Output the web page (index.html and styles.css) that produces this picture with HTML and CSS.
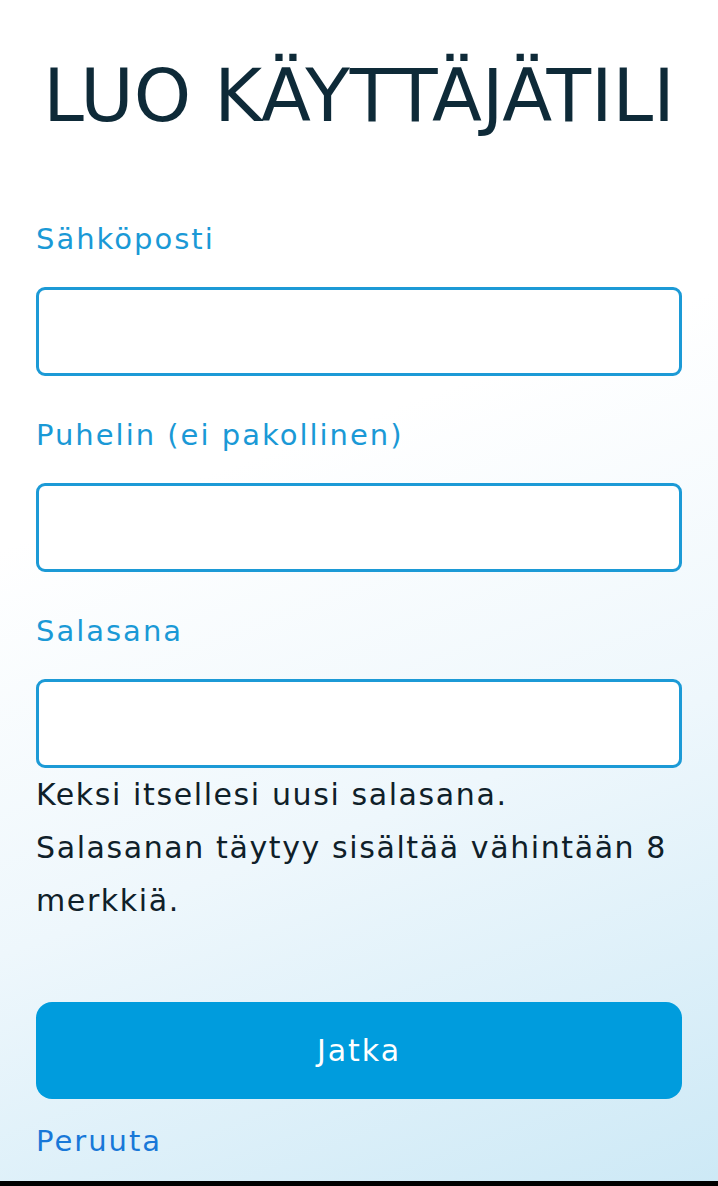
FILE: index.html
```html
<!DOCTYPE html>
<html lang="fi">
<head>
<meta charset="utf-8">
<title>Luo käyttäjätili</title>
<link rel="stylesheet" href="styles.css">
</head>
<body>
<main class="page">
  <h1 class="title">LUO KÄYTTÄJÄTILI</h1>
  <form class="form">
    <div class="field">
      <label class="label" for="email">Sähköposti</label>
      <input class="input" id="email" type="email">
    </div>
    <div class="field">
      <label class="label" for="phone">Puhelin (ei pakollinen)</label>
      <input class="input" id="phone" type="tel">
    </div>
    <div class="field field-last">
      <label class="label" for="pw">Salasana</label>
      <input class="input" id="pw" type="password">
    </div>
    <p class="hint">Keksi itsellesi uusi salasana.</p>
    <p class="hint">Salasanan täytyy sisältää vähintään 8 merkkiä.</p>
    <button class="btn" type="button">Jatka</button>
    <a class="cancel" href="#">Peruuta</a>
  </form>
</main>
<div class="bottom-bar"></div>
</body>
</html>
```

FILE: styles.css
```css
* { box-sizing: border-box; }
html, body { margin: 0; padding: 0; }
body {
  width: 718px;
  height: 1186px;
  overflow: hidden;
  font-family: "DejaVu Sans", "Noto Sans", sans-serif;
  background: linear-gradient(160deg, #ffffff 0%, #ffffff 38%, #eef7fc 66%, #cde9f6 100%);
  display: flex;
  flex-direction: column;
}
.page {
  flex: 1;
  padding: 0 36px;
}
.title {
  margin: 53px 0 0;
  font-size: 73px;
  line-height: 86px;
  font-weight: 400;
  color: #0e2a38;
  text-align: center;
  letter-spacing: 0;
  white-space: nowrap;
}
.form {
  margin-top: 80px;
  display: flex;
  flex-direction: column;
}
.field {
  display: flex;
  flex-direction: column;
  margin-bottom: 39px;
}
.field-last { margin-bottom: 0; }
.label {
  font-size: 29px;
  line-height: 40px;
  letter-spacing: 2px;
  color: #1a99d6;
  margin-bottom: 28px;
}
.input {
  height: 89px;
  border: 3.5px solid #1c9ad6;
  border-radius: 9px;
  background: #ffffff;
  width: 100%;
  font: inherit;
}
.hint {
  margin: 0;
  font-size: 30px;
  line-height: 53px;
  letter-spacing: 1.6px;
  color: #0f2029;
}
.btn {
  margin-top: 75px;
  height: 97px;
  width: 100%;
  border: none;
  border-radius: 16px;
  background: #009cdd;
  color: #ffffff;
  font-family: inherit;
  font-size: 30px;
  letter-spacing: 2px;
}
.cancel {
  margin-top: 22px;
  font-size: 29px;
  line-height: 40px;
  letter-spacing: 2px;
  color: #1878d8;
  text-decoration: none;
}
.bottom-bar {
  height: 5px;
  background: #000000;
}
```
